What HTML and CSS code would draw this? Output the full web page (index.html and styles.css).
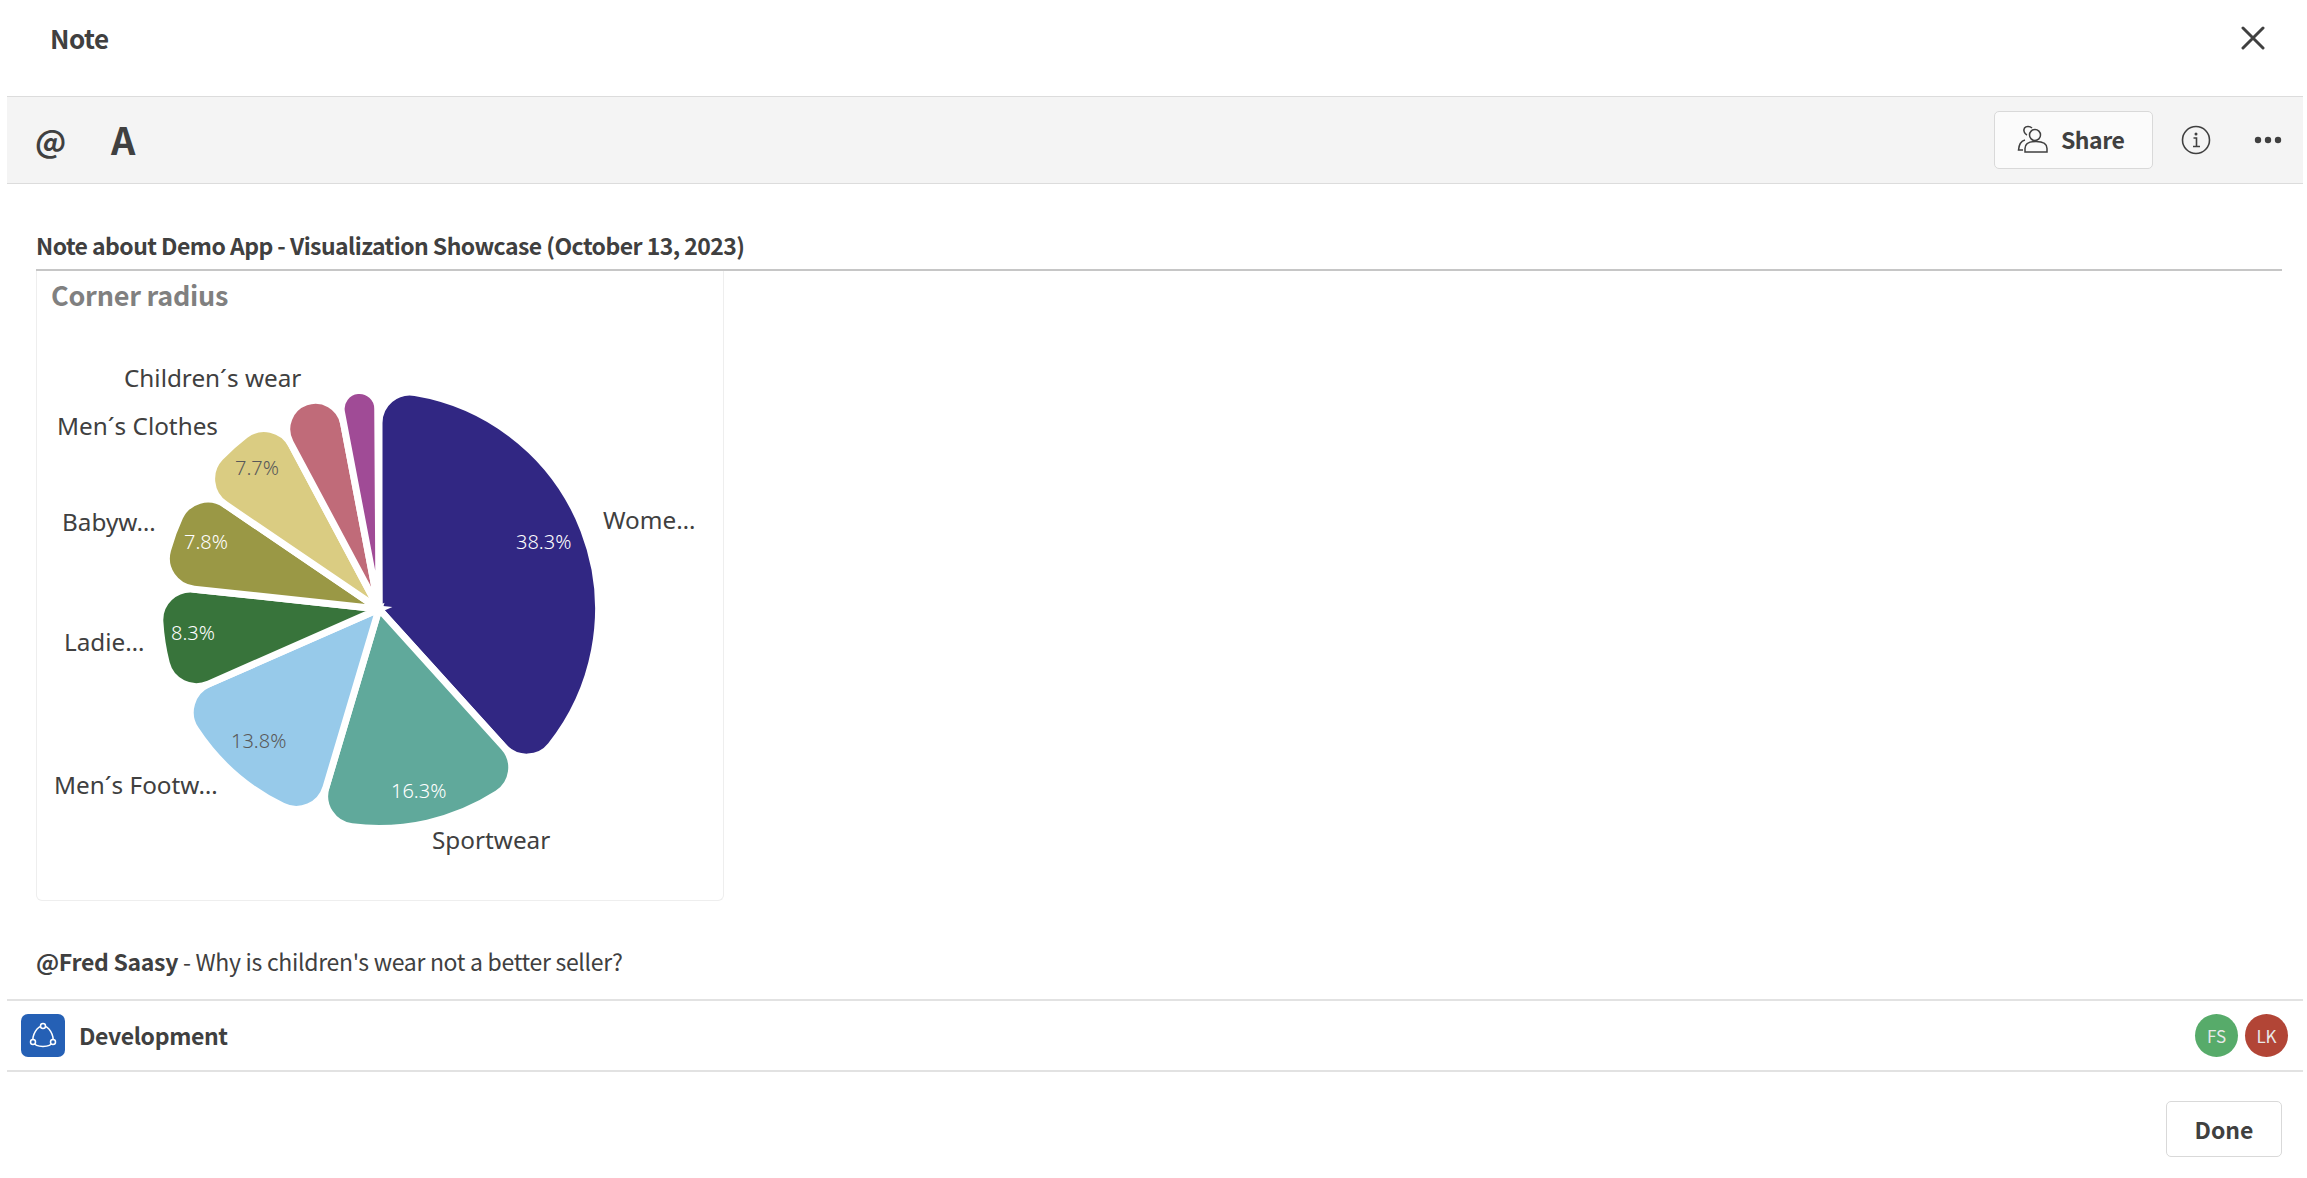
FILE: index.html
```html
<!DOCTYPE html>
<html>
<head>
    <title>Note</title>
    <link rel="stylesheet" href="styles.css">
</head>
<body>
    <div class="note-header">
        <span class="note-title">Note</span>
        <svg class="close-icon" width="24" height="24" viewBox="0 0 24 24">
            <path d="M2 2 L22 22 M22 2 L2 22" fill="none" stroke="#404040" stroke-width="3" stroke-linecap="round"/>
        </svg>
    </div>

    <div class="toolbar">
        <span class="tool-btn tool-at">@</span>
        <span class="tool-btn tool-a">A</span>
        <div class="toolbar-right">
            <div class="share-btn">
                <svg width="32" height="30" viewBox="0 0 32 30" fill="none" stroke="#404040" stroke-width="1.5">
                    <circle cx="18" cy="10" r="5.500"/>
                    <path d="M8 27 V23.500 C8 19 12 16.500 19 16.500 C26 16.500 30 19 30 23.500 V27 Z"/>
                    <path d="M15 3 C13 1 9 0.800 7.500 3 C6 5.500 7.500 9 10 10"/>
                    <path d="M8 15 C4 16 2 19 1.500 25 H6"/>
                </svg>
                <span>Share</span>
            </div>
            <svg class="info-icon" width="30" height="30" viewBox="0 0 30 30">
                <circle cx="15" cy="15" r="13.500" fill="none" stroke="#404040" stroke-width="1.600"/>
                <circle cx="15" cy="9" r="1.500" fill="#404040"/>
                <path d="M12.500 13 H15.500 V21 M12 21.500 H19" fill="none" stroke="#404040" stroke-width="1.600"/>
            </svg>
            <svg class="more-icon" width="28" height="8" viewBox="0 0 28 8">
                <circle cx="4" cy="4" r="3.200" fill="#404040"/>
                <circle cx="14" cy="4" r="3.200" fill="#404040"/>
                <circle cx="24" cy="4" r="3.200" fill="#404040"/>
            </svg>
        </div>
    </div>

    <div class="note-content">
        <div class="note-heading">Note about Demo App - Visualization Showcase (October 13, 2023)</div>
        <div class="chart-card">
            <svg id="pie" class="pie" width="686" height="629" viewBox="37 271 686 629">
                <text class="chart-title" x="51" y="306">Corner radius</text>
                <g id="slices"></g>
                <text class="pie-label" x="124" y="387">Children´s wear</text>
                <text class="pie-label" x="57" y="435">Men´s Clothes</text>
                <text class="pie-label" x="62" y="531">Babyw…</text>
                <text class="pie-label" x="64" y="651">Ladie…</text>
                <text class="pie-label" x="54" y="794">Men´s Footw…</text>
                <text class="pie-label" x="603" y="529">Wome…</text>
                <text class="pie-label" x="432" y="849">Sportwear</text>
                <text class="pie-value dark" x="235" y="475">7.7%</text>
                <text class="pie-value" x="184" y="549">7.8%</text>
                <text class="pie-value" x="171" y="640">8.3%</text>
                <text class="pie-value dark" x="231" y="748">13.8%</text>
                <text class="pie-value" x="516" y="549">38.3%</text>
                <text class="pie-value" x="391" y="798">16.3%</text>
            </svg>
        </div>
        <div class="note-text"><b>@Fred Saasy</b> - Why is children's wear not a better seller?</div>
    </div>

    <div class="space-row">
        <span class="space-icon">
            <svg width="28" height="28" viewBox="0 0 28 28" fill="none" stroke="#fff" stroke-width="1.500">
                <path d="M14 4 C20 4 25 13 24 20 C21 26 7 26 4 20 C3 13 8 4 14 4 Z"/>
                <circle cx="14" cy="4" r="2.500" fill="#2560b5"/>
                <circle cx="4" cy="20" r="2.500" fill="#2560b5"/>
                <circle cx="24" cy="20" r="2.500" fill="#2560b5"/>
            </svg>
        </span>
        <span class="space-name">Development</span>
        <div class="avatars">
            <span class="avatar avatar-fs">FS</span>
            <span class="avatar avatar-lk">LK</span>
        </div>
    </div>

    <div class="note-footer">
        <div class="done-btn">Done</div>
    </div>

    <script src="pie.js"></script>
</body>
</html>
```
FILE: styles.css
```css
body {
    margin: 0;
    background-color: #fff;
    color: #404040;
    font-family: "Noto Sans CJK SC", "Liberation Sans", sans-serif;
    height: 1178px;
    overflow: hidden;
}

.note-header {
    display: flex;
    justify-content: space-between;
    align-items: center;
    height: 76px;
    padding: 0 42px 0 50px;
}

.note-title {
    font-size: 26px;
    font-weight: 700;
    letter-spacing: -0.5px;
    padding-bottom: 2px;
}

.close-icon {
    display: block;
}

.toolbar {
    display: flex;
    align-items: center;
    height: 86px;
    margin: 20px 4px 0 7px;
    padding: 0 21px 0 28px;
    background-color: #f4f4f4;
    border-top: 1px solid #dcdcdc;
    border-bottom: 1px solid #dcdcdc;
}

.tool-btn {
    font-weight: 700;
    line-height: 1;
    padding-bottom: 2px;
}

.tool-at {
    width: 76px;
    font-size: 31px;
}

.tool-a {
    font-size: 38px;
}

.toolbar-right {
    display: flex;
    align-items: center;
    margin-left: auto;
}

.share-btn {
    display: flex;
    align-items: center;
    gap: 12px;
    box-sizing: border-box;
    width: 159px;
    height: 58px;
    padding-left: 22px;
    background-color: #fbfbfb;
    border: 1px solid #d9d9d9;
    border-radius: 5px;
    font-size: 23px;
    font-weight: 700;
    letter-spacing: -0.5px;
}

.share-btn span {
    padding-bottom: 2px;
}

.info-icon {
    margin-left: 28px;
}

.more-icon {
    margin-left: 43px;
}

.note-content {
    padding: 0 25px 0 36px;
}

.note-heading {
    box-sizing: border-box;
    height: 87px;
    padding-top: 43px;
    border-bottom: 2px solid #c6c6c6;
    font-size: 23px;
    line-height: 36px;
    font-weight: 700;
    letter-spacing: -0.55px;
}

.chart-card {
    box-sizing: border-box;
    width: 688px;
    height: 630px;
    border: 1px solid #eeeeee;
    border-top: none;
    border-radius: 0 0 6px 6px;
}

.pie {
    display: block;
}

.chart-title {
    font-size: 27px;
    font-weight: 700;
    letter-spacing: -0.25px;
    fill: #808080;
}

.pie-label {
    font-family: "Noto Sans", "Open Sans", sans-serif;
    font-size: 24.300px;
    fill: #404040;
}

.pie-value {
    font-family: "Noto Sans", "Open Sans", sans-serif;
    font-size: 20px;
    font-weight: 300;
    fill: #fff;
}

.pie-value.dark {
    fill: #595959;
}

.note-text {
    padding-top: 42px;
    font-size: 23px;
    line-height: 36px;
    letter-spacing: -0.3px;
}

.space-row {
    display: flex;
    align-items: center;
    box-sizing: border-box;
    height: 73px;
    margin: 20px 4px 0 7px;
    padding: 0 14px;
    border-top: 2px solid #e2e2e2;
    border-bottom: 2px solid #e2e2e2;
}

.space-icon {
    display: flex;
    align-items: center;
    justify-content: center;
    width: 44px;
    height: 43px;
    background-color: #2560b5;
    border-radius: 7px;
}

.space-name {
    margin-left: 14px;
    padding-bottom: 2px;
    font-size: 23px;
    font-weight: 700;
    letter-spacing: -0.35px;
}

.avatars {
    display: flex;
    gap: 7px;
    margin-left: auto;
    margin-right: 1px;
}

.avatar {
    display: flex;
    align-items: center;
    justify-content: center;
    width: 43px;
    height: 43px;
    border-radius: 50%;
    color: #e8e8e8;
    font-size: 17px;
}

.avatar-fs {
    background-color: #57ab6a;
}

.avatar-lk {
    background-color: #b24536;
}

.note-footer {
    display: flex;
    justify-content: flex-end;
    padding: 29px 25px 0 0;
}

.done-btn {
    display: flex;
    align-items: center;
    justify-content: center;
    box-sizing: border-box;
    width: 116px;
    height: 56px;
    border: 1px solid #d9d9d9;
    border-radius: 5px;
    font-size: 23px;
    font-weight: 700;
}
```
FILE: pie.js
```js
// corner radius pie, values in percent, clockwise from the top
var data = [
    { value: 38.3, color: "#312783" },
    { value: 16.3, color: "#60a99b" },
    { value: 13.8, color: "#97caea" },
    { value: 8.3, color: "#38743b" },
    { value: 7.8, color: "#9a9845" },
    { value: 7.7, color: "#dacc82" },
    { value: 4.8, color: "#c06b79" },
    { value: 2.9, color: "#a04b96" }
];

var cx = 379, cy = 609, R = 219.5, corner = 31;

function point(radius, angle) {
    var x = cx + radius * Math.sin(angle);
    var y = cy - radius * Math.cos(angle);
    return x.toFixed(2) + " " + y.toFixed(2);
}

function slicePath(start, end) {
    var half = Math.sin((end - start) / 2);
    var r = Math.min(corner, R * half / (1 + half));
    var off = Math.asin(r / (R - r));
    var edge = Math.sqrt((R - r) * (R - r) - r * r);
    var large = end - start - 2 * off > Math.PI ? 1 : 0;
    return "M" + cx + " " + cy +
        " L" + point(edge, start) +
        " A" + r + " " + r + " 0 0 1 " + point(R, start + off) +
        " A" + R + " " + R + " 0 " + large + " 1 " + point(R, end - off) +
        " A" + r + " " + r + " 0 0 1 " + point(edge, end) + " Z";
}

var group = document.getElementById("slices");
var angle = 0;
data.forEach(function (item) {
    var next = angle + item.value / 100 * Math.PI * 2;
    var path = document.createElementNS("http://www.w3.org/2000/svg", "path");
    path.setAttribute("d", slicePath(angle, next));
    path.setAttribute("fill", item.color);
    path.setAttribute("stroke", "#fff");
    path.setAttribute("stroke-width", "7");
    group.appendChild(path);
    angle = next;
});
```
